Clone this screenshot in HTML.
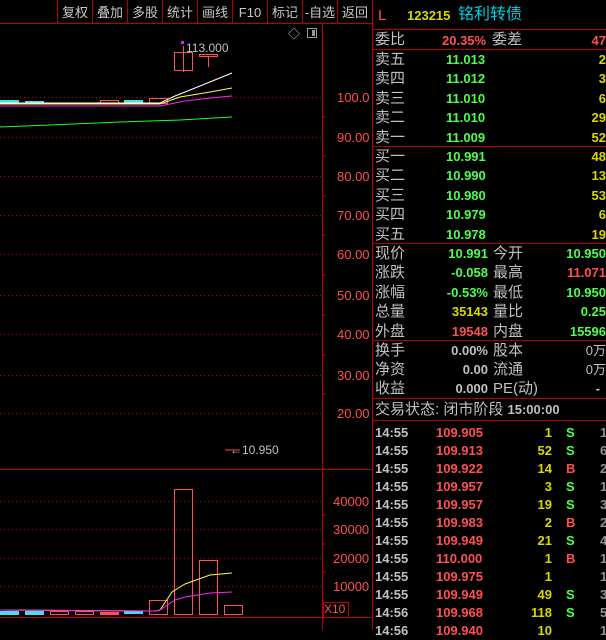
<!DOCTYPE html>
<html><head><meta charset="utf-8"><style>
body{margin:0;width:606px;height:630px;background:#000;overflow:hidden;position:relative;font-family:"Liberation Sans","Noto Sans CJK SC",sans-serif;font-size:13px;}
.a{position:absolute;white-space:nowrap;line-height:19px;}
.w{color:#c0c0c0}.g{color:#4cff4c}.r{color:#ff5050}.y{color:#d8d800}.c{color:#00d0e8}.gr{color:#909090}
.tb{position:absolute;top:0;height:23px;line-height:25px;color:#c8c8c8;font-size:13px;text-align:center;border-left:1px solid #b00000}
.rt{text-align:right}
</style></head><body>
<div class="tb" style="left:57px;width:34px">复权</div>
<div class="tb" style="left:92px;width:34px">叠加</div>
<div class="tb" style="left:127px;width:34px">多股</div>
<div class="tb" style="left:162px;width:34px">统计</div>
<div class="tb" style="left:197px;width:34px">画线</div>
<div class="tb" style="left:232px;width:34px">F10</div>
<div class="tb" style="left:267px;width:34px">标记</div>
<div class="tb" style="left:302px;width:34px">-自选</div>
<div class="tb" style="left:337px;width:34px">返回</div>
<svg style="position:absolute;left:0;top:0" width="606" height="630">
<line x1="0" y1="23.5" x2="372" y2="23.5" stroke="#c00000"/>
<line x1="322.5" y1="23" x2="322.5" y2="630" stroke="#c00000"/>
<line x1="372.5" y1="0" x2="372.5" y2="630" stroke="#c00000"/>
<line x1="0" y1="469.5" x2="372" y2="469.5" stroke="#c00000"/>
<line x1="0" y1="617.5" x2="372" y2="617.5" stroke="#c00000"/>
<rect x="323.5" y="602.5" width="25" height="15" fill="none" stroke="#c00000"/>
<g stroke="#c00000" stroke-dasharray="1,3">
<line x1="0" y1="97.5" x2="322" y2="97.5"/><line x1="0" y1="137.5" x2="322" y2="137.5"/>
<line x1="0" y1="176.5" x2="322" y2="176.5"/><line x1="0" y1="215.5" x2="322" y2="215.5"/>
<line x1="0" y1="254.5" x2="322" y2="254.5"/><line x1="0" y1="295.5" x2="322" y2="295.5"/>
<line x1="0" y1="334.5" x2="322" y2="334.5"/><line x1="0" y1="375.5" x2="322" y2="375.5"/>
<line x1="0" y1="413.5" x2="322" y2="413.5"/>
<line x1="0" y1="501.5" x2="322" y2="501.5"/><line x1="0" y1="529.5" x2="322" y2="529.5"/>
<line x1="0" y1="558.5" x2="322" y2="558.5"/><line x1="0" y1="586.5" x2="322" y2="586.5"/>
</g>
<g stroke="#c00000"><line x1="322" y1="117" x2="326" y2="117"/><line x1="322" y1="156" x2="326" y2="156"/><line x1="322" y1="196" x2="326" y2="196"/><line x1="322" y1="235" x2="326" y2="235"/><line x1="322" y1="275" x2="326" y2="275"/><line x1="322" y1="315" x2="326" y2="315"/><line x1="322" y1="355" x2="326" y2="355"/><line x1="322" y1="394" x2="326" y2="394"/><line x1="322" y1="515" x2="326" y2="515"/><line x1="322" y1="544" x2="326" y2="544"/><line x1="322" y1="572" x2="326" y2="572"/></g>
<rect x="0" y="100" width="19" height="4" fill="#40e0f0"/>
<rect x="25" y="101" width="19" height="3" fill="#40e0f0"/>
<rect x="124" y="100" width="19" height="3" fill="#40e0f0"/>
<rect x="100.5" y="100.5" width="18" height="3" fill="none" stroke="#ff5050"/>
<rect x="149.5" y="98.5" width="18" height="5" fill="none" stroke="#ff5050"/>
<rect x="174.5" y="52.5" width="18" height="18" fill="none" stroke="#ff5050"/>
<line x1="183.5" y1="46" x2="183.5" y2="72" stroke="#ff5050"/>
<rect x="199.5" y="54.5" width="18" height="2" fill="none" stroke="#ff5050"/>
<line x1="208.5" y1="56" x2="208.5" y2="67" stroke="#ff5050"/>
<rect x="181" y="41" width="3" height="3" fill="#e020e0"/>
<polyline points="0,103 160,103 175,96 200,86 232,73" fill="none" stroke="#fff"/>
<polyline points="0,104 160,104 180,97 210,92 232,88" fill="none" stroke="#ffff40"/>
<polyline points="0,106 160,106 185,101 210,98 232,96" fill="none" stroke="#ff20ff"/>
<polyline points="0,127 50,125 120,122 180,120 232,117" fill="none" stroke="#20ff20"/>
<line x1="225" y1="450" x2="240" y2="450" stroke="#ff5050"/>
<rect x="0" y="611" width="19" height="4" fill="#40e0f0"/>
<rect x="25" y="611" width="19" height="4" fill="#40e0f0"/>
<rect x="124" y="611" width="19" height="3" fill="#40e0f0"/>
<rect x="50.5" y="611.5" width="18" height="3" fill="none" stroke="#ff5050"/>
<rect x="75.5" y="611.5" width="18" height="3" fill="none" stroke="#ff5050"/>
<rect x="100" y="612" width="19" height="3" fill="#ff5050"/>
<rect x="149.5" y="600.5" width="18" height="14" fill="none" stroke="#ff5050"/>
<rect x="174.5" y="489.5" width="18" height="125" fill="none" stroke="#ff5050"/>
<rect x="199.5" y="560.5" width="18" height="54" fill="none" stroke="#ff5050"/>
<rect x="224.5" y="605.5" width="18" height="9" fill="none" stroke="#ff5050"/>
<polyline points="0,610 155,611 160,610 172,592 185,584 210,575 232,573" fill="none" stroke="#ffff40"/>
<polyline points="0,610 155,611 160,610 175,600 185,597 210,593 232,592" fill="none" stroke="#ff20ff"/>
<g stroke="#b00000"><line x1="372" y1="29.5" x2="606" y2="29.5"/><line x1="372" y1="49.5" x2="606" y2="49.5"/><line x1="372" y1="146.5" x2="606" y2="146.5"/><line x1="372" y1="243.5" x2="606" y2="243.5"/><line x1="372" y1="340.5" x2="606" y2="340.5"/><line x1="372" y1="398.5" x2="606" y2="398.5"/><line x1="372" y1="420.5" x2="606" y2="420.5"/></g>
</svg>
<div class="a w" style="left:288px;top:25px;font-size:12px">◇</div>
<div class="a" style="left:307px;top:28px;width:10px;height:10px;border:1px solid #999;box-sizing:border-box"><div style="position:absolute;right:1px;top:1px;width:3px;height:6px;background:#999"></div></div>
<div class="a w" style="left:186px;top:39px;font-size:12px">113.000</div>
<div class="a w" style="left:230px;top:441px;font-size:12px">←10.950</div>
<div class="a r" style="left:337px;top:88px">100.0</div>
<div class="a r" style="left:337px;top:128px">90.00</div>
<div class="a r" style="left:337px;top:167px">80.00</div>
<div class="a r" style="left:337px;top:206px">70.00</div>
<div class="a r" style="left:337px;top:245px">60.00</div>
<div class="a r" style="left:337px;top:286px">50.00</div>
<div class="a r" style="left:337px;top:325px">40.00</div>
<div class="a r" style="left:337px;top:366px">30.00</div>
<div class="a r" style="left:337px;top:404px">20.00</div>
<div class="a r" style="left:333px;top:492px">40000</div>
<div class="a r" style="left:333px;top:520px">30000</div>
<div class="a r" style="left:333px;top:549px">20000</div>
<div class="a r" style="left:333px;top:577px">10000</div>
<div class="a r" style="left:324px;top:600px;font-size:12px">X10</div>
<div class="a r" style="left:378px;top:6px;font-size:15px">L</div>
<div class="a y" style="left:407px;top:6px;font-weight:bold">123215</div>
<div class="a c" style="left:458px;top:5px;font-size:16px">铭利转债</div>
<div class="a w" style="left:375px;top:30px;font-size:15px">委比</div>
<div class="a r" style="left:442px;top:31px;font-weight:bold">20.35%</div>
<div class="a w" style="left:492px;top:30px;font-size:15px">委差</div>
<div class="a r rt" style="right:0;top:31px;font-weight:bold">47</div>
<div style="position:absolute;left:375px;top:50px;width:231px;font-weight:bold">
<div style="position:relative;height:19.4px"><span class="a w" style="left:0;font-size:15px;font-weight:normal">卖五</span><span class="a g" style="left:71px">11.013</span><span class="a y" style="right:0">2</span></div>
<div style="position:relative;height:19.4px"><span class="a w" style="left:0;font-size:15px;font-weight:normal">卖四</span><span class="a g" style="left:71px">11.012</span><span class="a y" style="right:0">3</span></div>
<div style="position:relative;height:19.4px"><span class="a w" style="left:0;font-size:15px;font-weight:normal">卖三</span><span class="a g" style="left:71px">11.010</span><span class="a y" style="right:0">6</span></div>
<div style="position:relative;height:19.4px"><span class="a w" style="left:0;font-size:15px;font-weight:normal">卖二</span><span class="a g" style="left:71px">11.010</span><span class="a y" style="right:0">29</span></div>
<div style="position:relative;height:19.4px"><span class="a w" style="left:0;font-size:15px;font-weight:normal">卖一</span><span class="a g" style="left:71px">11.009</span><span class="a y" style="right:0">52</span></div>
</div>
<div style="position:absolute;left:375px;top:147px;width:231px;font-weight:bold">
<div style="position:relative;height:19.4px"><span class="a w" style="left:0;font-size:15px;font-weight:normal">买一</span><span class="a g" style="left:71px">10.991</span><span class="a y" style="right:0">48</span></div>
<div style="position:relative;height:19.4px"><span class="a w" style="left:0;font-size:15px;font-weight:normal">买二</span><span class="a g" style="left:71px">10.990</span><span class="a y" style="right:0">13</span></div>
<div style="position:relative;height:19.4px"><span class="a w" style="left:0;font-size:15px;font-weight:normal">买三</span><span class="a g" style="left:71px">10.980</span><span class="a y" style="right:0">53</span></div>
<div style="position:relative;height:19.4px"><span class="a w" style="left:0;font-size:15px;font-weight:normal">买四</span><span class="a g" style="left:71px">10.979</span><span class="a y" style="right:0">6</span></div>
<div style="position:relative;height:19.4px"><span class="a w" style="left:0;font-size:15px;font-weight:normal">买五</span><span class="a g" style="left:71px">10.978</span><span class="a y" style="right:0">19</span></div>
</div>
<div style="position:absolute;left:375px;top:244px;width:231px;font-weight:bold">
<div style="position:relative;height:19.4px"><span class="a w" style="left:0;font-size:15px;font-weight:normal">现价</span><span class="a g" style="right:118px">10.991</span><span class="a w" style="left:118px;font-size:15px;font-weight:normal">今开</span><span class="a g" style="right:0">10.950</span></div>
<div style="position:relative;height:19.4px"><span class="a w" style="left:0;font-size:15px;font-weight:normal">涨跌</span><span class="a g" style="right:118px">-0.058</span><span class="a w" style="left:118px;font-size:15px;font-weight:normal">最高</span><span class="a r" style="right:0">11.071</span></div>
<div style="position:relative;height:19.4px"><span class="a w" style="left:0;font-size:15px;font-weight:normal">涨幅</span><span class="a g" style="right:118px">-0.53%</span><span class="a w" style="left:118px;font-size:15px;font-weight:normal">最低</span><span class="a g" style="right:0">10.950</span></div>
<div style="position:relative;height:19.4px"><span class="a w" style="left:0;font-size:15px;font-weight:normal">总量</span><span class="a y" style="right:118px">35143</span><span class="a w" style="left:118px;font-size:15px;font-weight:normal">量比</span><span class="a g" style="right:0">0.25</span></div>
<div style="position:relative;height:19.4px"><span class="a w" style="left:0;font-size:15px;font-weight:normal">外盘</span><span class="a r" style="right:118px">19548</span><span class="a w" style="left:118px;font-size:15px;font-weight:normal">内盘</span><span class="a g" style="right:0">15596</span></div>
</div>
<div style="position:absolute;left:375px;top:341px;width:231px;font-weight:bold">
<div style="position:relative;height:19px"><span class="a w" style="left:0;font-size:15px;font-weight:normal">换手</span><span class="a w" style="right:118px">0.00%</span><span class="a w" style="left:118px;font-size:15px;font-weight:normal">股本</span><span class="a w" style="right:0;font-weight:normal">0万</span></div>
<div style="position:relative;height:19px"><span class="a w" style="left:0;font-size:15px;font-weight:normal">净资</span><span class="a w" style="right:118px">0.00</span><span class="a w" style="left:118px;font-size:15px;font-weight:normal">流通</span><span class="a w" style="right:0;font-weight:normal">0万</span></div>
<div style="position:relative;height:19px"><span class="a w" style="left:0;font-size:15px;font-weight:normal">收益</span><span class="a w" style="right:118px">0.000</span><span class="a w" style="left:118px;font-weight:normal;font-size:15px">PE(动)</span><span class="a w" style="right:6px">-</span></div>
</div>
<div class="a w" style="left:375px;top:400px;font-size:15px">交易状态: 闭市阶段 <b style="font-size:13px">15:00:00</b></div>
<div style="position:absolute;left:375px;top:423px;width:231px;font-weight:bold">
<div style="position:relative;height:18px"><span class="a w" style="left:0">14:55</span><span class="a r" style="left:61px">109.905</span><span class="a y" style="right:54px">1</span><span class="a g" style="left:191px">S</span><span class="a gr" style="left:225px">1</span></div>
<div style="position:relative;height:18px"><span class="a w" style="left:0">14:55</span><span class="a r" style="left:61px">109.913</span><span class="a y" style="right:54px">52</span><span class="a g" style="left:191px">S</span><span class="a gr" style="left:225px">6</span></div>
<div style="position:relative;height:18px"><span class="a w" style="left:0">14:55</span><span class="a r" style="left:61px">109.922</span><span class="a y" style="right:54px">14</span><span class="a r" style="left:191px">B</span><span class="a gr" style="left:225px">2</span></div>
<div style="position:relative;height:18px"><span class="a w" style="left:0">14:55</span><span class="a r" style="left:61px">109.957</span><span class="a y" style="right:54px">3</span><span class="a g" style="left:191px">S</span><span class="a gr" style="left:225px">1</span></div>
<div style="position:relative;height:18px"><span class="a w" style="left:0">14:55</span><span class="a r" style="left:61px">109.957</span><span class="a y" style="right:54px">19</span><span class="a g" style="left:191px">S</span><span class="a gr" style="left:225px">3</span></div>
<div style="position:relative;height:18px"><span class="a w" style="left:0">14:55</span><span class="a r" style="left:61px">109.983</span><span class="a y" style="right:54px">2</span><span class="a r" style="left:191px">B</span><span class="a gr" style="left:225px">2</span></div>
<div style="position:relative;height:18px"><span class="a w" style="left:0">14:55</span><span class="a r" style="left:61px">109.949</span><span class="a y" style="right:54px">21</span><span class="a g" style="left:191px">S</span><span class="a gr" style="left:225px">4</span></div>
<div style="position:relative;height:18px"><span class="a w" style="left:0">14:55</span><span class="a r" style="left:61px">110.000</span><span class="a y" style="right:54px">1</span><span class="a r" style="left:191px">B</span><span class="a gr" style="left:225px">1</span></div>
<div style="position:relative;height:18px"><span class="a w" style="left:0">14:55</span><span class="a r" style="left:61px">109.975</span><span class="a y" style="right:54px">1</span><span class="a gr" style="left:225px">1</span></div>
<div style="position:relative;height:18px"><span class="a w" style="left:0">14:55</span><span class="a r" style="left:61px">109.949</span><span class="a y" style="right:54px">49</span><span class="a g" style="left:191px">S</span><span class="a gr" style="left:225px">3</span></div>
<div style="position:relative;height:18px"><span class="a w" style="left:0">14:56</span><span class="a r" style="left:61px">109.968</span><span class="a y" style="right:54px">118</span><span class="a g" style="left:191px">S</span><span class="a gr" style="left:225px">5</span></div>
<div style="position:relative;height:18px"><span class="a w" style="left:0">14:56</span><span class="a r" style="left:61px">109.940</span><span class="a y" style="right:54px">10</span><span class="a gr" style="left:225px">1</span></div>
</div>
</body></html>
